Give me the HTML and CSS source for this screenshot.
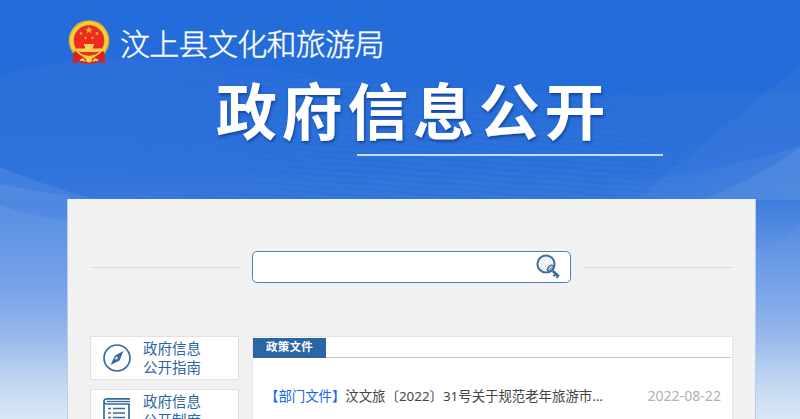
FILE: index.html
```html
<!DOCTYPE html>
<html lang="zh-CN">
<head>
<meta charset="utf-8">
<title>政府信息公开</title>
<link rel="stylesheet" href="styles.css">
</head>
<body>
<svg class="backdrop" viewBox="0 0 800 419" preserveAspectRatio="none" aria-hidden="true">
  <defs>
    <linearGradient id="sky" x1="0" y1="0" x2="0" y2="1">
      <stop offset="0" stop-color="#246cda"/><stop offset=".2" stop-color="#246cda"/>
      <stop offset=".4" stop-color="#286fdb"/><stop offset=".48" stop-color="#3576dc"/>
      <stop offset=".62" stop-color="#6596e4"/><stop offset=".8" stop-color="#96b7ec"/>
      <stop offset=".9" stop-color="#bdd4f1"/><stop offset="1" stop-color="#d9e8f6"/>
    </linearGradient>
    <linearGradient id="fade" x1="0" y1="0" x2="0" y2="1">
      <stop offset="0" stop-color="#84aeea" stop-opacity=".22"/>
      <stop offset="1" stop-color="#84aeea" stop-opacity="0"/>
    </linearGradient>
    <linearGradient id="side-fade">
      <stop offset="0" stop-color="#84aeea" stop-opacity="0"/>
      <stop offset="1" stop-color="#84aeea" stop-opacity=".15"/>
    </linearGradient>
    <linearGradient id="edges">
      <stop offset="0" stop-color="#000"/><stop offset=".35" stop-color="#fff"/>
      <stop offset=".75" stop-color="#fff"/><stop offset="1" stop-color="#000"/>
    </linearGradient>
    <mask id="soft"><rect x="130" y="50" width="620" height="160" fill="url(#edges)"/></mask>
    <pattern id="ripple" width="90" height="6" patternUnits="userSpaceOnUse" patternTransform="rotate(4)">
      <path d="M0 2Q22 1 45 2T90 2" fill="none" stroke="#1765d2" stroke-width="1.3" opacity=".28"/>
    </pattern>
  </defs>
  <rect width="800" height="419" fill="url(#sky)"/>
  <path d="M0 75Q80 52 190 60C310 71 370 93 540 94Q690 96 800 90V200H0Z" fill="#5a8fe0" opacity=".12"/>
  <g mask="url(#soft)">
    <path d="M130 57L190 60C310 71 370 93 540 94Q690 96 750 94V200H130Z" fill="url(#ripple)"/>
  </g>
  <path d="M800 65L635 199H800Z" fill="#6999e3" opacity=".1"/>
  <path d="M600 187Q710 174 800 146V200H600Z" fill="url(#side-fade)"/>
  <path d="M0 167Q45 186 95 199V290H0Z" fill="url(#fade)"/>
  <path d="M0 184Q35 192 70 196V290H0Z" fill="url(#fade)"/>
  <path d="M0 205Q35 217 70 222V330H0Z" fill="url(#fade)"/>
  <path d="M800 148Q755 179 704 199V310H800Z" fill="url(#fade)"/>
  <path d="M755 250Q777 245 800 226V370H755Z" fill="url(#fade)" opacity=".5"/>
</svg>

<div class="page">
  <header class="header">
    <div class="brand">
      <svg class="emblem" viewBox="0 0 42 44" aria-hidden="true">
        <circle cx="21" cy="20.500" r="20.300" fill="#e9ad25"/>
        <circle cx="21" cy="20.500" r="18.800" fill="#f8cc43"/>
        <circle cx="21" cy="20.500" r="15.500" fill="#b98520"/>
        <circle cx="21" cy="20.500" r="15" fill="#ed2b20"/>
        <path d="M21 6l1 2.900h3l-2.400 1.800.9 2.900-2.500-1.800-2.500 1.800.9-2.900L17 8.900h3Z" fill="#f0b22f"/>
        <g fill="#e9a02d"><circle cx="13" cy="13.500" r="1.400"/><circle cx="29" cy="13.500" r="1.400"/><circle cx="17.500" cy="18" r="1.300"/><circle cx="24.500" cy="18" r="1.300"/></g>
        <path d="M16 24h10v2h-1v2.500h9V32H8v-3.500h9V26h-1Z" fill="#fad052"/>
        <path d="M6 31.500h6l4 4-2 3-3 .5-1 4-5.500-.5Z" fill="#df2118"/>
        <path d="M36 31.500h-6l-4 4 2 3 3 .5 1 4 5.500-.5Z" fill="#df2118"/>
        <path d="M11 39l4-2 3 2h6l3-2 4 2-1 3-3 1.500H15L12 42Z" fill="#df2118"/>
        <path d="M9 31q5 6 12 6t12-6" fill="none" stroke="#f8cc43" stroke-width="1.800"/>
        <path d="M12 40.500l3-1.500 2 2.500M30 40.500l-3-1.500-2 2.500" fill="none" stroke="#fbd353" stroke-width="1.500"/>
        <circle cx="21" cy="39.500" r="3" fill="#fbd044"/>
      </svg>
      <span class="brand-name">汶上县文化和旅游局</span>
    </div>
    <h1 class="headline">政府信息公开</h1>
    <div class="headline-rule"></div>
  </header>

  <main class="content">
    <div class="search-row">
      <span class="rule"></span>
      <div class="search">
        <svg class="search-icon" viewBox="0 0 28 28" fill="none" stroke="#3d6d98" aria-hidden="true">
          <circle cx="11" cy="11" r="8.600" fill="#f3f5f7" stroke-width="2"/>
          <ellipse cx="15.700" cy="15.500" rx="3.500" ry="2.500" transform="rotate(-50 15.700 15.500)" stroke-width="1.500"/>
          <path d="M14.200 17l3-3" stroke-width="1"/>
          <path d="M17.800 18l6 5.500" stroke-width="2.800"/>
          <path d="M20.300 21.500l-1.800 1.700M23 23l-1.500 2M22 20.500l-1 1" stroke-width="2"/>
        </svg>
      </div>
      <span class="rule"></span>
    </div>

    <div class="columns">
      <nav class="side">
        <a class="side-item">
          <svg class="side-icon" viewBox="0 0 28 28" aria-hidden="true">
            <circle cx="14" cy="14" r="13" fill="none" stroke="#366b9c" stroke-width="1.700"/>
            <path d="M20.500 7L16.600 16.600 7.500 21l4.500-9.500Z" fill="#366b9c"/>
            <path d="M13.500 12.300l1.700 1.700-2.200 2-1.500-1.500Z" fill="#c5d6e5"/>
          </svg>
          <span>政府信息<br>公开指南</span>
        </a>
        <a class="side-item">
          <svg class="side-icon" viewBox="0 0 28 28" fill="none" stroke="#366b9c" aria-hidden="true">
            <path d="M27 1.800H4Q1 1.800 1 4.500V27H26V7H4Q1 7 1 4" stroke-width="1.700"/>
            <path d="M4 4.500H27" stroke-width="1.300"/>
            <path d="M5 11.500h3M10 11.500h12M5 16h3M10 16h12M5 20.500h3M10 20.500h12" stroke-width="1.500"/>
          </svg>
          <span>政府信息<br>公开制度</span>
        </a>
      </nav>
      <section class="panel">
        <div class="panel-head"><h2 class="tab">政策文件</h2></div>
        <div class="entry">
          <a class="entry-title"><span class="category">【部门文件】</span>汶文旅〔2022〕31号关于规范老年旅游市...</a>
          <time class="date">2022-08-22</time>
        </div>
      </section>
    </div>
  </main>
</div>
</body>
</html>
```
FILE: styles.css
```css
* { box-sizing: border-box; }
body {
  margin: 0;
  height: 419px;
  overflow: hidden;
  position: relative;
  font-family: "Noto Sans", "Noto Sans CJK SC", sans-serif;
}
.backdrop { position: absolute; inset: 0; width: 800px; height: 419px; }
.page { position: relative; width: 689px; height: 419px; margin-left: 67px; overflow: hidden; }
.header { height: 199px; padding: 20px 0 0 1px; color: #fff; }
.brand { display: flex; align-items: center; height: 44px; gap: 10px; }
.emblem { width: 42px; height: 44px; flex: none; }
.brand-name {
  font: 300 30px/44px "Noto Sans CJK SC", sans-serif;
  letter-spacing: -0.7px;
  white-space: nowrap;
  -webkit-text-stroke: .4px #fff;
}
.headline {
  margin: 8px 0 0 148px;
  font: 700 61px/74px "Noto Sans CJK SC", sans-serif;
  letter-spacing: 4.7px;
  white-space: nowrap;
  text-shadow: 1px 2px 3px rgba(8, 45, 125, .65);
}
.headline-rule { width: 306px; height: 2px; margin: 8px 0 0 289px; background: #c9dcf6; }
.content {
  height: 220px;
  padding: 52px 22px 0;
  background: #f1f1f1;
  border-left: 1px solid #b9cdef;
  border-right: 1px solid #b9cdef;
}
.search-row { display: flex; align-items: center; justify-content: space-between; height: 32px; }
.rule { width: 150px; height: 1px; background: #dedede; }
.search {
  display: flex;
  justify-content: flex-end;
  align-items: center;
  width: 319px;
  height: 32px;
  padding-right: 7px;
  background: #fff;
  border: 1px solid #4b82b7;
  border-radius: 5px;
}
.search-icon { width: 28px; height: 28px; }
.columns { display: flex; gap: 13px; margin-top: 53px; }
.side { display: flex; flex-direction: column; gap: 9px; width: 149px; flex: none; }
.side-item {
  display: flex;
  align-items: center;
  gap: 12px;
  height: 44px;
  padding-left: 12px;
  background: #fff;
  border: 1px solid #e1e1e1;
  color: #2e65a1;
  font: 14.5px/19px "Noto Sans CJK SC", sans-serif;
}
.side-item span { margin-top: -2px; }
.side-icon { width: 28px; height: 28px; flex: none; }
.panel { flex: 1; height: 83px; padding: 1px 1px 0 0; background: #fff; border: 1px solid #e5e5e5; border-bottom: 0; }
.panel-head { display: flex; height: 20px; border-bottom: 1px solid #c6c6c6; }
.tab {
  margin: 0;
  width: 73px;
  height: 20px;
  background: #2c65a3;
  color: #fff;
  font: 700 11.5px/17px "Noto Sans CJK SC", sans-serif;
  letter-spacing: .3px;
  text-align: center;
}
.entry {
  display: flex;
  justify-content: space-between;
  margin-top: 27px;
  padding: 0 10px 0 12px;
  font-size: 13.4px;
  line-height: 22px;
  white-space: nowrap;
  color: #444;
}
.category { color: #1266ed; }
.date { font-size: 14.1px; color: #b0b0b0; }
```
